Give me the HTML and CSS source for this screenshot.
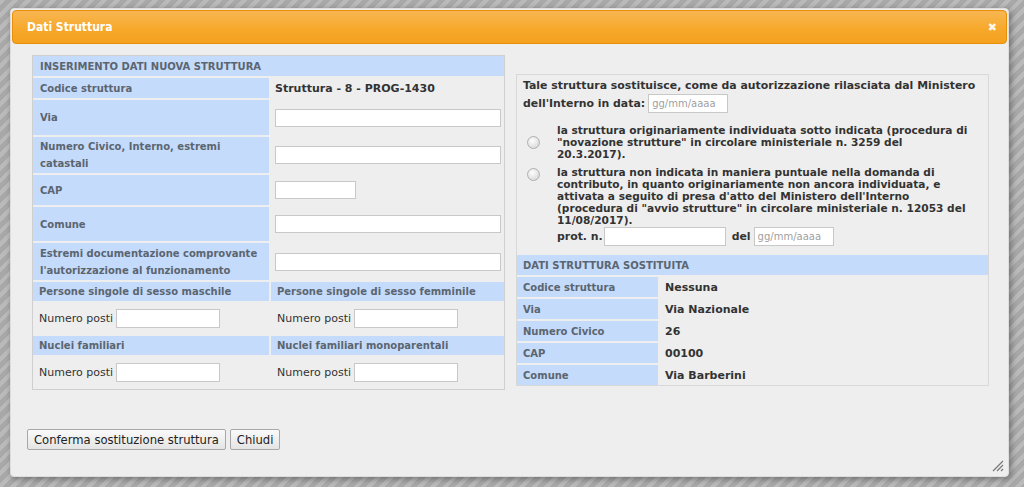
FILE: index.html
```html
<!DOCTYPE html>
<html lang="it">
<head>
<meta charset="utf-8">
<title>Dati Struttura</title>
<link rel="stylesheet" href="styles.css">
</head>
<body>
<div class="page">
  <div class="dialog">
    <div class="titlebar">
      <span class="title">Dati Struttura</span>
      <span class="close">&#x2716;</span>
    </div>
    <div class="content">
      <div class="columns">
        <div class="newbox">
          <div class="hdr span2">INSERIMENTO DATI NUOVA STRUTTURA</div>
          <div class="lbl">Codice struttura</div>
          <div class="val strong">Struttura - 8 - PROG-1430</div>
          <div class="lbl">Via</div>
          <div class="val"><input class="txt wide" type="text"></div>
          <div class="lbl two">Numero Civico, Interno, estremi<br>catastali</div>
          <div class="val"><input class="txt wide" type="text"></div>
          <div class="lbl">CAP</div>
          <div class="val"><input class="txt short" type="text"></div>
          <div class="lbl">Comune</div>
          <div class="val"><input class="txt wide" type="text"></div>
          <div class="lbl two">Estremi documentazione comprovante<br>l'autorizzazione al funzionamento</div>
          <div class="val"><input class="txt wide" type="text"></div>
          <div class="hdr sub">Persone singole di sesso maschile</div>
          <div class="hdr sub">Persone singole di sesso femminile</div>
          <div class="posti">Numero posti <input class="txt num" type="text"></div>
          <div class="posti">Numero posti <input class="txt num" type="text"></div>
          <div class="hdr sub">Nuclei familiari</div>
          <div class="hdr sub">Nuclei familiari monoparentali</div>
          <div class="posti">Numero posti <input class="txt num" type="text"></div>
          <div class="posti">Numero posti <input class="txt num" type="text"></div>
        </div>
        <div class="oldbox">
          <div class="intro">Tale struttura sostituisce, come da autorizzazione rilasciata dal Ministero</div>
          <div class="intro2">dell'Interno in data: <input class="txt date" type="text" placeholder="gg/mm/aaaa"></div>
          <div class="choice first">
            <span class="radio"><input type="radio" name="tipo"></span>
            <span class="ctext">la struttura originariamente individuata sotto indicata (procedura di<br>"novazione strutture" in circolare ministeriale n. 3259 del<br>20.3.2017).</span>
          </div>
          <div class="choice second">
            <span class="radio"><input type="radio" name="tipo"></span>
            <span class="ctext">la struttura non indicata in maniera puntuale nella domanda di<br>contributo, in quanto originariamente non ancora individuata, e<br>attivata a seguito di presa d'atto del Ministero dell'Interno<br>(procedura di "avvio strutture" in circolare ministeriale n. 12053 del<br>11/08/2017).</span>
          </div>
          <div class="prot">prot. n. <input class="txt protn" type="text"> del <input class="txt date deldate" type="text" placeholder="gg/mm/aaaa"></div>
          <div class="oldtable">
            <div class="hdr span2">DATI STRUTTURA SOSTITUITA</div>
            <div class="lbl">Codice struttura</div><div class="oval">Nessuna</div>
            <div class="lbl">Via</div><div class="oval">Via Nazionale</div>
            <div class="lbl">Numero Civico</div><div class="oval">26</div>
            <div class="lbl">CAP</div><div class="oval">00100</div>
            <div class="lbl">Comune</div><div class="oval">Via Barberini</div>
          </div>
        </div>
      </div>
      <div class="buttons">
        <button class="btn" type="button">Conferma sostituzione struttura</button>
        <button class="btn" type="button">Chiudi</button>
      </div>
    </div>
    <div class="resize">
      <svg width="12" height="12" viewBox="0 0 12 12"><path d="M11 1 L1 11 M11 5 L5 11 M11 9 L9 11" stroke="#777" stroke-width="1.2" fill="none"/></svg>
    </div>
  </div>
</div>
</body>
</html>
```

FILE: styles.css
```css
html, body {
  margin: 0;
  padding: 0;
  height: 100%;
}
body {
  font-family: "DejaVu Sans", Verdana, sans-serif;
  font-size: 11px;
  color: #333;
  background: repeating-linear-gradient(135deg, #bababa 0 4px, #a8a8a8 4px 9px);
  overflow: hidden;
}
.page {
  padding: 8px 0 0 10px;
}
.dialog {
  position: relative;
  box-sizing: border-box;
  width: 999px;
  height: 469px;
  padding: 1px;
  background: #eeeeee;
  border: 1px solid #dddddd;
  border-radius: 4px;
  box-shadow: 2px 2px 6px rgba(0,0,0,0.35);
}
.titlebar {
  box-sizing: border-box;
  height: 34px;
  display: flex;
  align-items: center;
  justify-content: space-between;
  padding: 0 9px 0 14px;
  border: 1px solid #e78f08;
  border-radius: 4px;
  background: linear-gradient(#f8b653, #f6a828 60%, #f4a11f);
  color: #fff;
}
.title {
  font-weight: bold;
  font-size: 12px;
  font-family: "DejaVu Sans Condensed", "DejaVu Sans", sans-serif;
}
.close {
  font-size: 11px;
  font-weight: bold;
  color: #fff;
  opacity: 0.9;
}
.content {
  padding: 11px 0 0 14px;
}
.columns {
  display: flex;
  align-items: flex-start;
  gap: 11px;
  margin-left: 6px;
}
.newbox {
  box-sizing: border-box;
  width: 473px;
  border: 1px solid #cfcfcf;
  display: grid;
  grid-template-columns: 236px 233px;
  grid-template-rows: 20px 20px 35px 36px 30px 34px 37px 19px 31px 19px 31px;
  column-gap: 2px;
  row-gap: 2px;
  padding-bottom: 1px;
}
.hdr, .lbl {
  background: #c5dbfb;
  font-weight: bold;
  font-size: 10px;
  color: #5b6570;
  display: flex;
  align-items: center;
  padding-left: 7px;
  white-space: nowrap;
}
.span2 {
  grid-column: 1 / 3;
}
.hdr.sub {
  padding-left: 6px;
}
.lbl.two {
  line-height: 17px;
}
.val {
  display: flex;
  align-items: center;
  padding-left: 4px;
}
.val.strong {
  font-weight: bold;
  font-size: 11px;
  color: #333;
}
.txt {
  box-sizing: border-box;
  height: 18px;
  border: 1px solid #c8c8c8;
  background: #fff;
  margin: 0;
  padding: 1px 3px;
  font-family: "DejaVu Sans", sans-serif;
  font-size: 10px;
  font-weight: normal;
}
.txt::placeholder {
  color: #a0a0a0;
}
.wide { width: 226px; }
.short { width: 81px; }
.num { width: 104px; height: 19px; }
.posti {
  display: flex;
  align-items: center;
  gap: 3px;
  padding-left: 6px;
  font-size: 11px;
  color: #333;
}
.oldbox {
  box-sizing: border-box;
  width: 473px;
  margin-top: 19px;
  border: 1px solid #d8d8d8;
  padding-top: 2px;
  font-weight: bold;
  font-size: 10.9px;
}
.intro {
  padding-left: 6px;
  height: 17px;
  line-height: 17px;
  white-space: nowrap;
}
.intro2 {
  padding-left: 6px;
  height: 19px;
  display: flex;
  align-items: center;
  gap: 3px;
}
.date { width: 80px; height: 19px; }
.choice {
  display: flex;
  align-items: center;
  padding-left: 10px;
}
.choice.first { margin-top: 11px; }
.choice.second { margin-top: 6px; align-items: flex-start; }
.radio {
  width: 30px;
  flex: none;
}
.radio input {
  appearance: none;
  -webkit-appearance: none;
  width: 13px;
  height: 13px;
  margin: 0;
  border: 1px solid #b0b0b0;
  border-radius: 50%;
  background: radial-gradient(circle at 40% 35%, #fdfdfd, #d0d0d0);
  display: block;
}
.choice.second .radio input { margin-top: 2px; }
.ctext {
  line-height: 12px;
  font-size: 10.6px;
  white-space: nowrap;
}
.prot {
  display: flex;
  align-items: center;
  padding-left: 40px;
  margin-top: 1px;
  height: 19px;
}
.protn { width: 122px; height: 19px; margin: 0 6px 0 1px; }
.deldate { margin-left: 3px; }
.oldtable {
  margin-top: 9px;
  display: grid;
  grid-template-columns: 141px 1fr;
  grid-template-rows: 20px 20px 20px 20px 20px 20px;
  row-gap: 2px;
}
.oldtable .lbl, .oldtable .hdr { padding-left: 6px; }
.oval {
  display: flex;
  align-items: center;
  padding-left: 7px;
  font-size: 11px;
  color: #333;
}
.buttons {
  display: flex;
  gap: 4px;
  margin-top: 39px;
  margin-left: 1px;
}
.btn {
  box-sizing: border-box;
  height: 21px;
  padding: 0 6px;
  font-family: "DejaVu Sans", sans-serif;
  font-size: 11.6px;
  color: #222;
  background: linear-gradient(#fafafa, #e4e4e4);
  border: 1px solid #a8a8a8;
  border-radius: 2px;
}
.resize {
  position: absolute;
  right: 4px;
  bottom: 4px;
  width: 12px;
  height: 12px;
}
```
